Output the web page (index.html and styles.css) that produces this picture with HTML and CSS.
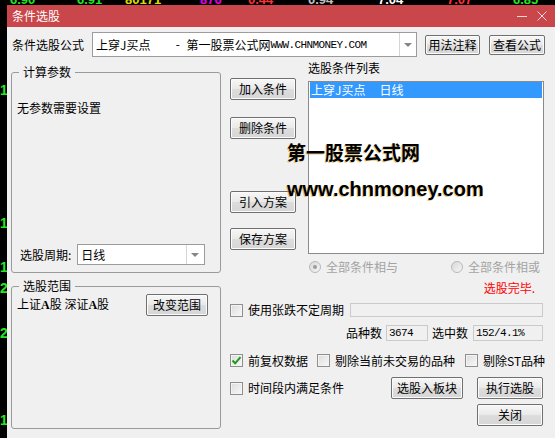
FILE: index.html
```html
<!DOCTYPE html>
<html lang="zh-CN">
<head>
    <meta charset="UTF-8">
    <meta name="viewport" content="width=device-width, initial-scale=1.0">
    <title>条件选股</title>
    <link rel="stylesheet" href="styles.css">
</head>
<body>
    <div class="screen">
        <!-- 背后的行情表 -->
        <div class="quote-row">
            <span class="quote q-up w1">6.90</span>
            <span class="quote q-up w2">6.91</span>
            <span class="quote q-vol w3">80171</span>
            <span class="quote q-amt w4">876</span>
            <span class="quote q-down w5">0.44</span>
            <span class="quote q-flat w6">0.94</span>
            <span class="quote q-white w7">7.04</span>
            <span class="quote q-down w8">7.07</span>
            <span class="quote q-up">6.85</span>
        </div>
        <div class="side-marks">
            <span class="mark m1">1</span>
            <span class="mark m2">1</span>
            <span class="mark m3">1</span>
            <span class="mark m4">2</span>
            <span class="mark m5">2</span>
            <span class="mark m6">1</span>
        </div>

        <div class="dialog">
            <div class="titlebar">
                <span class="title">条件选股</span>
                <div class="win-btns">
                    <svg class="win-min" width="10" height="10" viewBox="0 0 10 10"><path d="M0 5.5H10"/></svg>
                    <svg class="win-close" width="10" height="10" viewBox="0 0 10 10"><path d="M0.5 0.5L9.5 9.5M9.5 0.5L0.5 9.5"/></svg>
                </div>
            </div>

            <div class="dialog-body">
                <div class="formula-row">
                    <span class="formula-label">条件选股公式</span>
                    <div class="combo combo-formula">
                        <span class="combo-text">上穿J买点<span class="mono">    - </span>第一股票公式网<span class="mono">WWW.CHNMONEY.COM</span></span>
                        <span class="combo-arrow"></span>
                    </div>
                    <button class="btn btn-note">用法注释</button>
                    <button class="btn btn-view">查看公式</button>
                </div>

                <div class="main">
                    <div class="left-col">
                        <div class="group group-params">
                            <span class="group-title">计算参数</span>
                            <p class="no-params">无参数需要设置</p>
                            <div class="period-row">
                                <span class="period-label">选股周期:</span>
                                <div class="combo combo-period">
                                    <span class="combo-text">日线</span>
                                    <span class="combo-arrow"></span>
                                </div>
                            </div>
                        </div>
                        <div class="group group-range">
                            <span class="group-title">选股范围</span>
                            <div class="range-row">
                                <span>上证<b class="latin-a">A</b>股 深证<b class="latin-a">A</b>股</span>
                                <button class="btn btn-range">改变范围</button>
                            </div>
                        </div>
                    </div>

                    <div class="right-col">
                        <div class="cond-area">
                            <div class="cond-buttons">
                                <button class="btn btn-side">加入条件</button>
                                <button class="btn btn-side btn-del">删除条件</button>
                                <button class="btn btn-side btn-import">引入方案</button>
                                <button class="btn btn-side btn-save">保存方案</button>
                            </div>
                            <div class="cond-list-col">
                                <div class="list-title">选股条件列表</div>
                                <ul class="cond-list">
                                    <li class="cond-item selected">上穿J买点<span class="cond-period">日线</span></li>
                                </ul>
                                <div class="radio-row">
                                    <label class="radio disabled"><span class="radio-dot checked"></span>全部条件相与</label>
                                    <label class="radio disabled"><span class="radio-dot"></span>全部条件相或</label>
                                </div>
                                <div class="status">选股完毕.</div>
                            </div>
                        </div>

                        <div class="options">
                            <div class="opt-row row-cycle">
                                <label class="check-item"><span class="check"></span>使用张跌不定周期</label>
                                <span class="field field-cycle"></span>
                            </div>
                            <div class="opt-row row-count">
                                <span class="count-label">品种数</span>
                                <span class="field field-total mono">3674</span>
                                <span class="count-label sel-label">选中数</span>
                                <span class="field field-sel mono">152/4.1%</span>
                            </div>
                            <div class="opt-row row-flags">
                                <label class="check-item">
                                    <span class="check checked">
                                        <svg width="11" height="11" viewBox="0 0 11 11"><path d="M1.5 5.5L4.2 8.3L9.5 2.2"/></svg>
                                    </span>前复权数据
                                </label>
                                <label class="check-item flag-idle"><span class="check"></span>剔除当前未交易的品种</label>
                                <label class="check-item flag-st"><span class="check"></span>剔除ST品种</label>
                            </div>
                            <div class="opt-row row-actions">
                                <label class="check-item"><span class="check"></span>时间段内满足条件</label>
                                <button class="btn btn-block">选股入板块</button>
                                <button class="btn btn-run">执行选股</button>
                            </div>
                            <div class="opt-row row-close">
                                <button class="btn btn-run">关闭</button>
                            </div>
                        </div>
                    </div>
                </div>
            </div>

            <div class="watermark">
                <div class="wm-cn">第一股票公式网</div>
                <div class="wm-en">www.chnmoney.com</div>
            </div>
        </div>
    </div>
</body>
</html>
```

FILE: styles.css
```css
* {
    box-sizing: border-box;
    margin: 0;
    padding: 0;
}

body {
    background: #000;
    color: #000;
    font: 12px/14px "Noto Sans CJK SC", "Liberation Sans", sans-serif;
}

.screen {
    position: relative;
    width: 555px;
    height: 438px;
    overflow: hidden;
    background: #000;
}

/* 行情表残影 */
.quote-row {
    position: absolute;
    top: -7px;
    left: 10px;
    display: flex;
    font: bold 13px/13px "Liberation Sans", sans-serif;
    white-space: nowrap;
}

.w1 { width: 67px; }
.w2 { width: 48px; }
.w3 { width: 75px; }
.w4 { width: 48px; }
.w5 { width: 60px; }
.w6 { width: 70px; }
.w7 { width: 69px; }
.w8 { width: 66px; }

.q-up { color: #22e622; }
.q-vol { color: #dede00; }
.q-amt { color: #e000e0; }
.q-down { color: #ff3232; }
.q-flat { color: #c0c0c0; }
.q-white { color: #fff; }

.mark {
    position: absolute;
    left: 0;
    color: #22e622;
    font: bold 14px/14px "Liberation Sans", sans-serif;
}

.m1 { top: 83px; }
.m2 { top: 216px; }
.m3 { top: 260px; }
.m4 { top: 281px; }
.m5 { top: 326px; }
.m6 { top: 413px; }

/* 对话框 */
.dialog {
    position: absolute;
    left: 7px;
    top: 5px;
    width: 548px;
    height: 433px;
    background: #f0f0f0;
}

.titlebar {
    height: 22px;
    display: flex;
    align-items: center;
    padding-left: 5px;
    background: #c9464a;
    color: #fff;
}

.win-btns {
    margin-left: auto;
    margin-top: -1px;
    padding-right: 8px;
    display: flex;
    align-items: center;
    gap: 10px;
}

.win-btns svg path {
    stroke: #f5d9d9;
    stroke-width: 1;
    fill: none;
}

.dialog-body {
    padding: 5px 0 0 4px;
}

.formula-row {
    display: flex;
    align-items: center;
    height: 25px;
    padding-left: 1px;
}

.formula-label {
    width: 72px;
    margin-right: 8px;
}

.mono {
    font: 11px/14px "Liberation Mono", monospace;
    letter-spacing: -0.6px;
    white-space: pre;
}

.combo {
    display: flex;
    align-items: stretch;
    background: #fff;
    border: 1px solid #9c9c9c;
}

.combo-text {
    flex: 1;
    display: flex;
    align-items: center;
    padding-left: 3px;
    white-space: pre;
    overflow: hidden;
}

.combo-arrow {
    position: relative;
    width: 17px;
    border-left: 1px solid #d6d6d6;
}

.combo-arrow:after {
    content: '';
    position: absolute;
    left: 4px;
    top: 50%;
    margin-top: -2px;
    border-left: 4px solid transparent;
    border-right: 4px solid transparent;
    border-top: 4px solid #858585;
}

.combo-formula {
    width: 325px;
    height: 25px;
}

.combo-period {
    width: 128px;
    height: 21px;
}

.combo-period .combo-arrow {
    width: 18px;
}

.btn {
    height: 22px;
    border: 1px solid #707070;
    border-radius: 2px;
    background: linear-gradient(#f7f7f7, #e9e9e9 50%, #dddddd 51%, #d6d6d6);
    box-shadow: inset 0 0 0 1px #fbfbfb;
    color: #000;
    font: inherit;
    text-align: center;
    white-space: nowrap;
}

.btn-note {
    width: 55px;
    height: 20px;
    margin-left: 8px;
}

.btn-view {
    width: 56px;
    height: 20px;
    margin-left: 9px;
}

.main {
    display: flex;
    gap: 9px;
    margin-top: 4px;
}

.left-col {
    width: 210px;
    display: flex;
    flex-direction: column;
}

.group {
    display: flex;
    flex-direction: column;
    border: 1px solid #9a9a9a;
    border-radius: 3px;
}

.group-title {
    align-self: flex-start;
    margin: -8px 0 0 7px;
    padding: 0 4px;
    background: #f0f0f0;
}

.group-params {
    margin-top: 11px;
    height: 201px;
}

.no-params {
    margin-top: 22px;
    padding-left: 5px;
}

.period-row {
    margin-top: auto;
    margin-bottom: 7px;
    padding-left: 8px;
    display: flex;
    align-items: center;
    gap: 6px;
}

.group-range {
    margin-top: 13px;
    height: 143px;
}

.range-row {
    margin-top: 1px;
    padding: 0 12px 0 5px;
    display: flex;
    align-items: center;
    justify-content: space-between;
}

.latin-a {
    font: bold 12px "Liberation Serif", serif;
}

.btn-range {
    width: 62px;
}

.right-col {
    width: 314px;
    display: flex;
    flex-direction: column;
}

.cond-area {
    display: flex;
    gap: 12px;
}

.cond-buttons {
    width: 66px;
    padding-top: 17px;
    display: flex;
    flex-direction: column;
}

.btn-del { margin-top: 17px; }
.btn-import { margin-top: 52px; }
.btn-save { margin-top: 15px; }

.cond-list-col {
    width: 236px;
}

.cond-list {
    list-style: none;
    margin-top: 6px;
    height: 173px;
    padding: 0 1px;
    background: #fff;
    border: 1px solid #8a8a8a;
}

.cond-item {
    height: 16px;
    padding-left: 1px;
    line-height: 16px;
}

.cond-item.selected {
    background: #3399ff;
    color: #fff;
}

.cond-period {
    margin-left: 14px;
}

.radio-row {
    margin-top: 6px;
    padding: 0 4px 0 1px;
    display: flex;
    justify-content: space-between;
}

.radio {
    display: flex;
    align-items: center;
    gap: 5px;
}

.radio.disabled {
    color: #a3a3a3;
}

.radio-dot {
    position: relative;
    width: 12px;
    height: 12px;
    border: 1px solid #b8b8b8;
    border-radius: 50%;
    background: linear-gradient(135deg, #d8d8d8, #f6f6f6);
}

.radio-dot.checked:after {
    content: '';
    position: absolute;
    left: 3px;
    top: 3px;
    width: 4px;
    height: 4px;
    border-radius: 50%;
    background: #9d9d9d;
}

.status {
    margin-top: 7px;
    padding-right: 9px;
    text-align: right;
    color: #ff0000;
}

.options {
    margin-top: 8px;
    display: flex;
    flex-direction: column;
}

.opt-row {
    display: flex;
    align-items: center;
}

.check-item {
    display: flex;
    align-items: center;
    flex-shrink: 0;
    gap: 5px;
    white-space: nowrap;
}

.check {
    display: flex;
    align-items: center;
    justify-content: center;
    flex-shrink: 0;
    width: 13px;
    height: 13px;
    border: 1px solid #8f8f8f;
    background: linear-gradient(135deg, #dcdcdc, #f8f8f8);
    box-shadow: inset 0 0 0 1px #f3f3f3;
}

.check svg path {
    fill: none;
    stroke: #1e9a1e;
    stroke-width: 2;
}

.row-cycle {
    height: 14px;
}

.field {
    height: 16px;
    padding-left: 2px;
    border: 1px solid #cacaca;
    background: #f0f0f0;
    display: flex;
    align-items: center;
    flex-shrink: 0;
}

.field-cycle {
    flex: 1;
    flex-shrink: 1;
    height: 14px;
    margin: 0 1px 0 6px;
}

.row-count {
    margin-top: 8px;
    height: 16px;
    justify-content: flex-end;
    padding-right: 1px;
    white-space: nowrap;
}

.count-label {
    margin-right: 4px;
}

.field-total {
    width: 42px;
    margin-right: 4px;
}

.sel-label {
    margin-right: 5px;
}

.field-sel {
    width: 70px;
}

.row-flags {
    margin-top: 13px;
    height: 13px;
}

.flag-idle { margin-left: 9px; }
.flag-st { margin-left: 10px; }

.row-actions {
    margin-top: 10px;
    height: 22px;
}

.btn-block {
    width: 72px;
    margin-left: auto;
}

.btn-run {
    width: 66px;
    margin: 0 1px 0 14px;
}

.row-close {
    margin-top: 5px;
    justify-content: flex-end;
}

/* 水印 */
.watermark {
    position: absolute;
    left: 280px;
    top: 137px;
    color: #000;
    text-shadow: -1px 1px 0 rgba(214, 160, 40, 0.55);
    white-space: nowrap;
}

.wm-cn {
    font: bold 19px/20px "Noto Sans CJK SC", sans-serif;
}

.wm-en {
    margin-top: 17px;
    font: bold 20px/20px "Liberation Sans", sans-serif;
}
```
